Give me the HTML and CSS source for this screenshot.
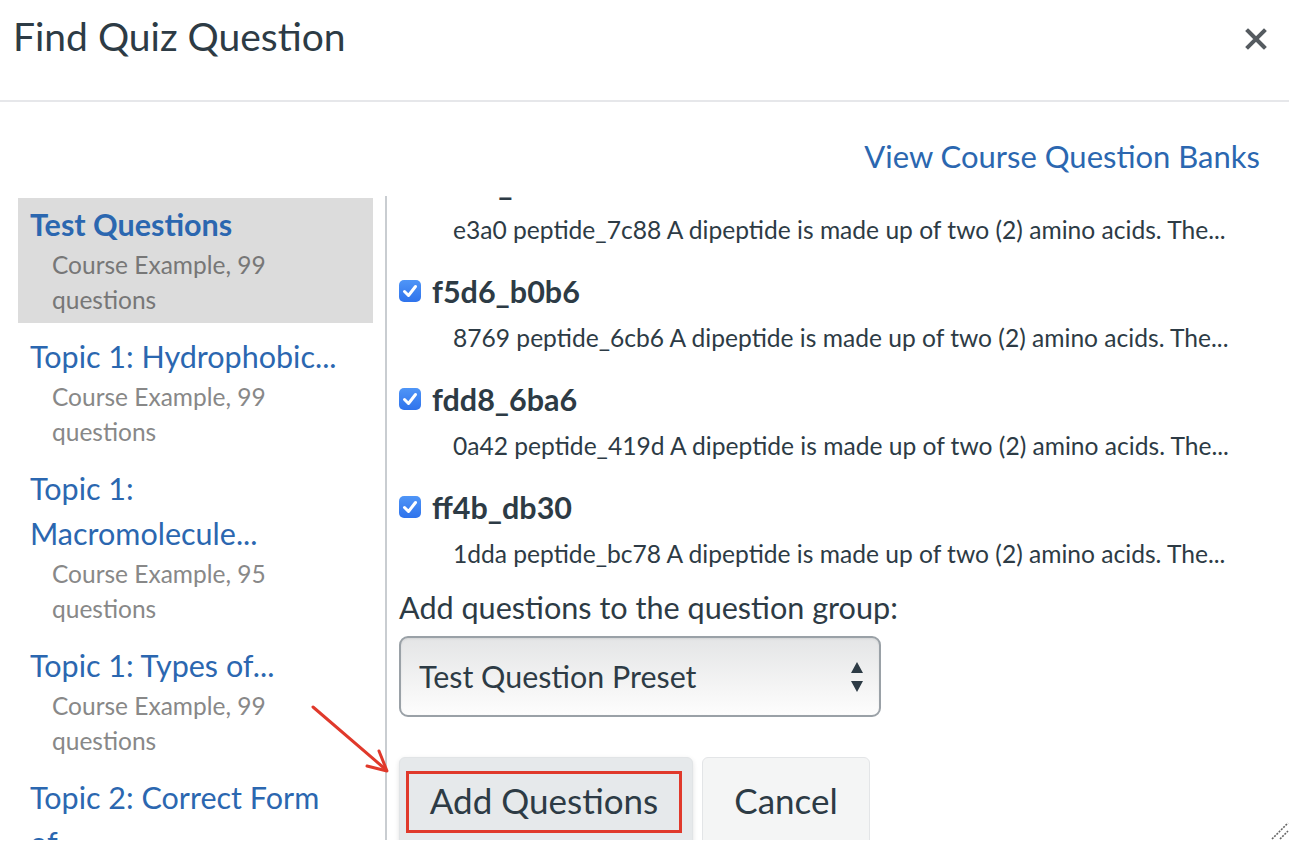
FILE: index.html
```html
<!DOCTYPE html>
<html lang="en">
<head>
<meta charset="utf-8">
<title>Find Quiz Question</title>
<link rel="stylesheet" href="styles.css">
</head>
<body>
<div class="dialog">
  <header class="hdr">
    <h1 class="hdr-title">Find Quiz Question</h1>
    <button class="close" aria-label="Close">
      <svg width="22" height="22" viewBox="0 0 22 22"><path d="M3 3 L19 19 M19 3 L3 19" stroke="#555b60" stroke-width="4" stroke-linecap="square"/></svg>
    </button>
  </header>
  <div class="body">
    <div class="toplink"><a class="link" href="#">View Course Question Banks</a></div>
    <div class="cols">
      <ul class="banks">
        <li class="bank active"><div class="bank-title bold">Test Questions</div><div class="bank-sub">Course Example, 99<br>questions</div></li>
        <li class="bank"><div class="bank-title">Topic 1: Hydrophobic...</div><div class="bank-sub">Course Example, 99<br>questions</div></li>
        <li class="bank"><div class="bank-title">Topic 1:<br>Macromolecule...</div><div class="bank-sub">Course Example, 95<br>questions</div></li>
        <li class="bank"><div class="bank-title">Topic 1: Types of...</div><div class="bank-sub">Course Example, 99<br>questions</div></li>
        <li class="bank"><div class="bank-title">Topic 2: Correct Form<br>of...</div><div class="bank-sub">Course Example, 99<br>questions</div></li>
      </ul>
      <div class="main">
        <div class="qlist">
          <div class="q"><div class="q-head"><span class="cb"><svg width="22" height="22" viewBox="0 0 22 22"><path d="M5.5 11.5 L9.5 15.5 L16.5 6.5" fill="none" stroke="#fff" stroke-width="3" stroke-linecap="round" stroke-linejoin="round"/></svg></span><span class="q-title">e2c1_a4f0</span></div><div class="q-desc">e3a0 peptide_7c88 A dipeptide is made up of two (2) amino acids. The...</div></div>
          <div class="q"><div class="q-head"><span class="cb"><svg width="22" height="22" viewBox="0 0 22 22"><path d="M5.5 11.5 L9.5 15.5 L16.5 6.5" fill="none" stroke="#fff" stroke-width="3" stroke-linecap="round" stroke-linejoin="round"/></svg></span><span class="q-title">f5d6_b0b6</span></div><div class="q-desc">8769 peptide_6cb6 A dipeptide is made up of two (2) amino acids. The...</div></div>
          <div class="q"><div class="q-head"><span class="cb"><svg width="22" height="22" viewBox="0 0 22 22"><path d="M5.5 11.5 L9.5 15.5 L16.5 6.5" fill="none" stroke="#fff" stroke-width="3" stroke-linecap="round" stroke-linejoin="round"/></svg></span><span class="q-title">fdd8_6ba6</span></div><div class="q-desc">0a42 peptide_419d A dipeptide is made up of two (2) amino acids. The...</div></div>
          <div class="q"><div class="q-head"><span class="cb"><svg width="22" height="22" viewBox="0 0 22 22"><path d="M5.5 11.5 L9.5 15.5 L16.5 6.5" fill="none" stroke="#fff" stroke-width="3" stroke-linecap="round" stroke-linejoin="round"/></svg></span><span class="q-title">ff4b_db30</span></div><div class="q-desc">1dda peptide_bc78 A dipeptide is made up of two (2) amino acids. The...</div></div>
        </div>
        <div class="group-label">Add questions to the question group:</div>
        <div class="select">
          <span class="select-text">Test Question Preset</span>
          <svg class="select-arrows" width="12" height="30" viewBox="0 0 12 30"><path d="M6 0 L12 11 L0 11 Z M0 19 L12 19 L6 30 Z" fill="#2d3b45"/></svg>
        </div>
        <div class="btns">
          <button class="btn btn-primary"><span class="btn-mark">Add Questions</span></button>
          <button class="btn btn-cancel">Cancel</button>
        </div>
      </div>
    </div>
  </div>
  <svg class="anno-arrow" width="90" height="80" viewBox="0 0 90 80"><path d="M3 3 L74 64" stroke="#e0392b" stroke-width="3" stroke-linecap="round"/><path d="M57 62 L77 67 L69 47" fill="none" stroke="#e0392b" stroke-width="3" stroke-linecap="round" stroke-linejoin="round"/></svg>
  <svg class="grip" width="18" height="18" viewBox="0 0 18 18"><path d="M1 17 L17 1 M9 17 L17 9" stroke="#666" stroke-width="1.6" stroke-dasharray="2 1.2"/></svg>
</div>
</body>
</html>
```
FILE: styles.css
```css
* { box-sizing: border-box; }
html, body { margin: 0; padding: 0; background: #fff; }
body { font-family: Lato, "Noto Sans", sans-serif; color: #2d3b45; }

.dialog {
  position: relative;
  width: 1289px;
  height: 840px;
  overflow: hidden;
  background: #fff;
}

.hdr {
  height: 102px;
  border-bottom: 2px solid #e6e7ea;
  display: flex;
  justify-content: space-between;
  align-items: flex-start;
  padding: 12px 22px 0 13px;
}
.hdr-title {
  margin: 0;
  font-size: 39px;
  font-weight: 400;
  line-height: 48px;
  color: #2d3b45;
}
.close {
  margin-top: 16px;
  padding: 0;
  border: 0;
  background: none;
  width: 22px;
  height: 22px;
}
.close svg { display: block; }

.body { padding: 0 29px 0 18px; }
.toplink {
  display: flex;
  justify-content: flex-end;
  padding-top: 36px;
  height: 94px;
}
.link {
  font-size: 31px;
  line-height: 37px;
  color: #2b67b0;
  text-decoration: none;
}

.cols {
  display: flex;
  height: 644px;
}

.banks {
  list-style: none;
  margin: 0;
  padding: 2px 0 0 0;
  width: 369px;
  flex: none;
  border-right: 2px solid #c9cdd1;
}
.bank {
  margin: 0 12px 7px 0;
  padding: 4px 12px 6px 12px;
}
.bank.active { background: #dcdcdc; }
.bank-title {
  font-size: 30.5px;
  line-height: 45px;
  color: #2b67b0;
  white-space: nowrap;
}
.bank-title.bold { font-weight: 700; }
.bank-sub {
  padding-left: 22px;
  font-size: 24.5px;
  line-height: 35px;
  color: #888888;
}
.bank.active .bank-sub { color: #777777; }

.main {
  flex: 1;
  padding-left: 12px;
  display: flex;
  flex-direction: column;
  align-items: flex-start;
}
.main > * { flex: none; }
.qlist {
  height: 375px;
  overflow: hidden;
  display: flex;
  flex-direction: column;
  justify-content: flex-end;
  gap: 24px;
  width: 100%;
}
.q { flex: none; }
.q-head {
  display: flex;
  align-items: center;
  height: 40px;
}
.cb {
  width: 22px;
  height: 22px;
  border-radius: 5px;
  background: linear-gradient(#4f95f7, #2f73ec);
  margin-right: 11px;
  flex: none;
}
.cb svg { display: block; }
.q-title {
  font-size: 30.5px;
  font-weight: 700;
  line-height: 40px;
  color: #2d3b45;
}
.q-desc {
  margin-top: 9px;
  padding-left: 54px;
  font-size: 24.6px;
  line-height: 35px;
  color: #2d3b45;
  white-space: nowrap;
}

.group-label {
  margin-top: 18px;
  font-size: 30.6px;
  line-height: 37px;
}
.select {
  margin-top: 10px;
  width: 482px;
  height: 81px;
  border: 2px solid #9aa1a7;
  border-radius: 9px;
  background: linear-gradient(#e4e5e6, #f6f6f6 70%, #fdfdfd);
  box-shadow: inset 0 1px 2px rgba(0,0,0,0.08);
  display: flex;
  align-items: center;
  justify-content: space-between;
  padding: 0 16px 0 18px;
}
.select-text {
  font-size: 30.4px;
  line-height: 37px;
  color: #2d3b45;
}
.select-arrows { display: block; }

.btns {
  margin-top: 40px;
  display: flex;
  gap: 9px;
}
.btn {
  font-family: inherit;
  height: 110px;
  border-radius: 6px;
  font-size: 35px;
  color: #2d3b45;
  display: flex;
  align-items: flex-start;
  justify-content: center;
}
.btn-primary {
  width: 294px;
  padding: 13px 10px 0 6px;
  background: #e6e9eb;
  border: 1px solid #e1e4e6;
  box-shadow: 0 2px 5px rgba(0,0,0,0.12);
}
.btn-mark {
  display: flex;
  justify-content: center;
  width: 277px;
  border: 3px solid #e0392b;
  padding: 4.5px 0 9.5px;
  line-height: 42px;
}
.btn-cancel {
  width: 168px;
  background: #f4f5f5;
  border: 1px solid #e3e5e7;
  padding-top: 20.5px;
  line-height: 42px;
}

.anno-arrow {
  position: absolute;
  left: 310px;
  top: 704px;
}
.grip {
  position: absolute;
  right: 0;
  bottom: 0;
}
```
